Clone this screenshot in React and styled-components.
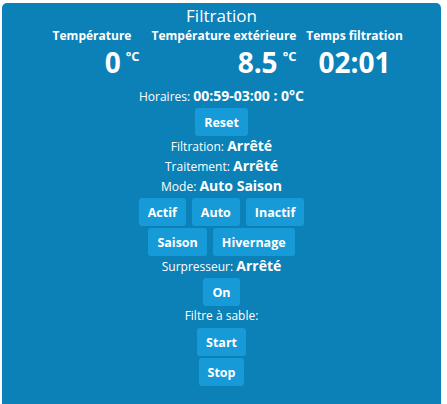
import React from 'react'
import styled, { createGlobalStyle } from 'styled-components'

const GlobalStyle = createGlobalStyle`
  body {
    margin: 0;
    background: #ffffff;
    font-family: 'Open Sans', 'DejaVu Sans', sans-serif;
  }
`

function App() {
  return (
    <>
      <GlobalStyle />
      <Panel>
        <Title>Filtration</Title>
        <Stats>
          <Stat $w={100} $pr={5} $align='right'>
            <StatLabel>Température</StatLabel>
            <StatValue>0<Unit>°C</Unit></StatValue>
          </Stat>
          <Stat $w={146} $pr={1} $align='right'>
            <StatLabel>Température extérieure</StatLabel>
            <StatValue>8.5<Unit>°C</Unit></StatValue>
          </Stat>
          <Stat $w={100} $pr={0} $align='center'>
            <StatLabel>Temps filtration</StatLabel>
            <StatValue>02:01</StatValue>
          </Stat>
        </Stats>

        <Line>Horaires: <b>00:59-03:00 : 0°C</b></Line>
        <Row><Button>Reset</Button></Row>
        <Line>Filtration: <b>Arrêté</b></Line>
        <Line>Traitement: <b>Arrêté</b></Line>
        <Line>Mode: <b>Auto Saison</b></Line>
        <Row>
          <Button>Actif</Button>
          <Button>Auto</Button>
          <Button>Inactif</Button>
        </Row>
        <Row>
          <Button>Saison</Button>
          <Button>Hivernage</Button>
        </Row>
        <Line>Surpresseur: <b>Arrêté</b></Line>
        <Row><Button>On</Button></Row>
        <Line>Filtre à sable:</Line>
        <Row><Button>Start</Button></Row>
        <Row><Button>Stop</Button></Row>
      </Panel>
    </>
  )
}

const Panel = styled.div`
  margin: 3px 6px 0 2px;
  height: 404px;
  background-color: #0b81b7;
  border-radius: 5px 5px 0 0;
  color: #ffffff;
  display: flex;
  flex-direction: column;
  align-items: center;
  padding-top: 3px;
  box-sizing: border-box;
`
const Title = styled.div`
  font-size: 17px;
  line-height: 20px;
`
const Stats = styled.div`
  display: flex;
  gap: 7px;
  margin: 1px 0 6px 6px;
`
const Stat = styled.div`
  width: ${p => p.$w}px;
  padding-right: ${p => p.$pr}px;
  box-sizing: border-box;
  display: flex;
  flex-direction: column;
  align-items: center;
  > div:last-child {
    align-self: ${p => (p.$align === 'right' ? 'flex-end' : 'center')};
  }
`
const StatLabel = styled.div`
  font-size: 12px;
  font-weight: 700;
  line-height: 17px;
  white-space: nowrap;
`
const StatValue = styled.div`
  font-size: 28px;
  font-weight: 700;
  line-height: 36px;
  white-space: nowrap;
`
const Unit = styled.sup`
  font-size: 13px;
  font-weight: 700;
  margin-left: 5px;
  vertical-align: 12px;
  line-height: 0;
`
const Line = styled.div`
  font-size: 12px;
  height: 20px;
  line-height: 20px;
  white-space: nowrap;
  b {
    font-size: 14px;
    font-weight: 700;
  }
`
const Row = styled.div`
  display: flex;
  justify-content: center;
  gap: 6px;
  margin-top: 2px;
`
const Button = styled.button`
  height: 28px;
  padding: 0 9px;
  border: none;
  border-radius: 3px;
  background-color: #169ad8;
  color: #ffffff;
  font-family: 'Open Sans', 'DejaVu Sans', sans-serif;
  font-size: 12.5px;
  font-weight: 700;
  cursor: pointer;
`

export default App
